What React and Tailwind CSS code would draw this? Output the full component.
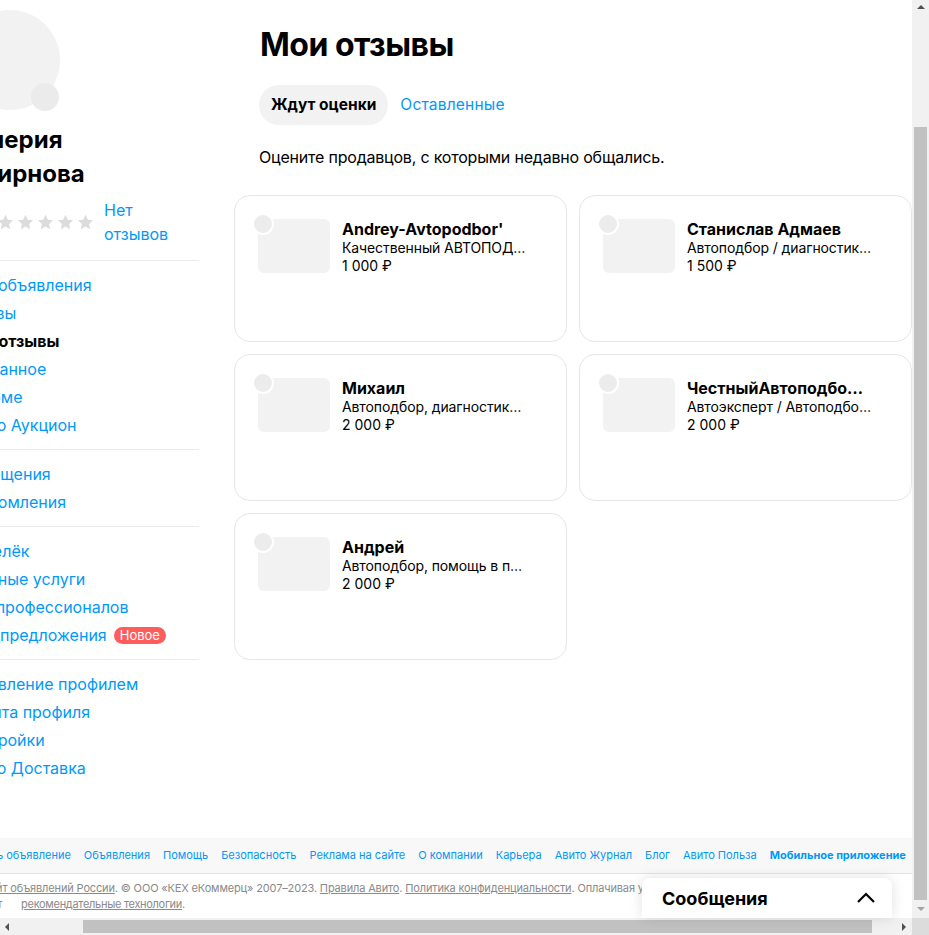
import React from "react";

const font = { fontFamily: "Inter, 'Noto Sans', sans-serif" };

function Star() {
  return (
    <svg width="17" height="17" viewBox="0 0 24 24">
      <path
        d="M12 1.2l3.2 6.9 7.5.8-5.6 5.1 1.6 7.4L12 17.6l-6.7 3.8 1.6-7.4-5.6-5.1 7.5-.8z"
        fill="#dcdcdc"
      />
    </svg>
  );
}

const groups = [
  [
    { t: "Мои объявления" },
    { t: "Заказы" },
    { t: "Мои отзывы", active: true },
    { t: "Избранное" },
    { t: "Резюме" },
    { t: "Авито Аукцион" },
  ],
  [{ t: "Сообщения" }, { t: "Уведомления" }],
  [
    { t: "Кошелёк" },
    { t: "Платные услуги" },
    { t: "Для профессионалов" },
    { t: "Спецпредложения", badge: "Новое" },
  ],
  [
    { t: "Управление профилем" },
    { t: "Защита профиля" },
    { t: "Настройки" },
    { t: "Авито Доставка" },
  ],
];

const cards = [
  { name: "Andrey-Avtopodbor'", desc: "Качественный АВТОПОДБОР по Москве", price: "1 000 ₽" },
  { name: "Станислав Адмаев", desc: "Автоподбор / диагностика авто", price: "1 500 ₽" },
  { name: "Михаил", desc: "Автоподбор, диагностика авто перед покупкой", price: "2 000 ₽" },
  { name: "ЧестныйАвтоподбор77", desc: "Автоэксперт / Автоподбор / Выездная диагностика", price: "2 000 ₽" },
  { name: "Андрей", desc: "Автоподбор, помощь в покупке авто", price: "2 000 ₽" },
];

const footerLinks = [
  "Разместить объявление",
  "Объявления",
  "Помощь",
  "Безопасность",
  "Реклама на сайте",
  "О компании",
  "Карьера",
  "Авито Журнал",
  "Блог",
  "Авито Польза",
];

function Card({ c }) {
  return (
    <div className="h-[147px] rounded-[16px] border border-[#e6e6e6] bg-white pt-[23px] pl-[23px]">
      <div className="flex items-start">
        <div className="relative w-[72px] h-[54px] shrink-0">
          <div className="w-[72px] h-[54px] rounded-[6px] bg-[#f2f2f2]" />
          <div className="absolute left-[-6px] top-[-6px] w-[22px] h-[22px] rounded-full bg-[#ececec] border-2 border-white" />
        </div>
        <div className="ml-[12px] w-[186px] min-w-0">
          <div className="text-[16px] leading-[20px] font-bold text-black truncate">{c.name}</div>
          <div className="text-[14px] leading-[18px] text-black truncate tracking-[-0.1px]">{c.desc}</div>
          <div className="text-[14px] leading-[18px] text-black">{c.price}</div>
        </div>
      </div>
    </div>
  );
}

function Tri({ dir, color }) {
  const pts = {
    up: "4,8 8,4 12,8",
    down: "4,5 8,9 12,5",
    left: "8,4 4,8 8,12",
    right: "6,4 10,8 6,12",
  }[dir];
  return (
    <svg width="16" height="16" viewBox="0 0 16 16">
      <polygon points={pts} fill={color} />
    </svg>
  );
}

export default function App() {
  return (
    <div className="relative w-[929px] h-[935px] overflow-hidden bg-white flex flex-col" style={font}>
      <div className="flex h-[918px]">
        {/* page viewport */}
        <div className="w-[912px] h-[918px] overflow-hidden flex flex-col">
          <div className="flex flex-1 min-h-0">
            {/* sidebar */}
            <aside className="w-[239px] ml-[-40px] shrink-0 pt-[10px]">
              <div className="relative w-[100px] h-[100px]">
                <div className="w-[100px] h-[100px] rounded-full bg-[#f2f2f2]" />
                <div className="absolute left-[71px] top-[73px] w-[28px] h-[28px] rounded-full bg-[#ebebeb]" />
              </div>
              <div className="mt-[13px] text-[24px] leading-[34px] font-bold text-black">
                Валерия
                <br />
                Смирнова
              </div>
              <div className="mt-[7px] flex items-center">
                <div className="ml-[37px] flex gap-[3px]">
                  <Star />
                  <Star />
                  <Star />
                  <Star />
                  <Star />
                </div>
                <div className="ml-[10px] text-[16px] leading-[24px] text-[#0099f7]">
                  Нет
                  <br />
                  отзывов
                </div>
              </div>
              {groups.map((g, gi) => (
                <div key={gi}>
                  <div className={gi === 0 ? "mt-[14px] h-px bg-[#ebebeb]" : "h-px bg-[#ebebeb]"} />
                  <div className="py-[10px]">
                    {g.map((it) => (
                      <div key={it.t} className="flex items-center h-[28px] text-[16px] whitespace-nowrap">
                        <span className={it.active ? "font-bold text-black" : "text-[#0099f7]"}>{it.t}</span>
                        {it.badge && (
                          <span className="ml-[7px] h-[17px] px-[6px] rounded-full bg-[#ff5c5c] text-white text-[13px] leading-[17px]">
                            {it.badge}
                          </span>
                        )}
                      </div>
                    ))}
                  </div>
                </div>
              ))}
            </aside>

            {/* main */}
            <main className="ml-[35px] w-[678px] shrink-0 pt-[25px]">
              <div className="pl-[26px]">
                <h1 className="text-[32px] leading-[40px] font-bold text-black tracking-[-0.5px]">Мои отзывы</h1>
                <div className="mt-[20px] flex ml-[-1px]">
                  <div className="h-[40px] px-[12px] rounded-full bg-[#f2f2f2] flex items-center text-[15.5px] font-bold text-black">
                    Ждут оценки
                  </div>
                  <div className="h-[40px] px-[12px] flex items-center text-[15.5px] text-[#0099f7] tracking-[0.2px]">
                    Оставленные
                  </div>
                </div>
                <p className="mt-[20px] ml-[-1px] text-[16px] leading-[24px] text-black tracking-[-0.2px]">
                  Оцените продавцов, с которыми недавно общались.
                </p>
              </div>
              <div className="mt-[26px] grid grid-cols-2 gap-[12px]">
                {cards.map((c) => (
                  <Card key={c.name} c={c} />
                ))}
              </div>
            </main>
          </div>

          {/* footer */}
          <footer className="shrink-0">
            <div className="h-[36px] bg-[#f8f8f8] border-b border-[#e4e4e4] flex items-center">
              <div className="ml-[-60px] flex gap-[13px] whitespace-nowrap text-[11px] text-[#0099f7]">
                {footerLinks.map((l) => (
                  <span key={l}>{l}</span>
                ))}
                <span className="font-bold">Мобильное приложение</span>
              </div>
            </div>
            <div className="pt-[6px] pb-[6px] text-[11px] leading-[16px] text-[#8a8a8a] whitespace-nowrap">
              <div className="ml-[-64px] tracking-[-0.15px]">
                <span className="underline">Авито — сайт объявлений России</span>. © ООО «КЕХ eКоммерц» 2007–2023.{" "}
                <span className="underline">Правила Авито</span>.{" "}
                <span className="underline">Политика конфиденциальности</span>. Оплачивая услуги на Авито, вы принимаете оферту. Авито
              </div>
              <div className="ml-[-56px] tracking-[-0.3px]">
                использует<span className="ml-[19px] underline">рекомендательные технологии</span>.
              </div>
            </div>
          </footer>
        </div>

        {/* vertical scrollbar */}
        <div className="w-[17px] h-[918px] bg-[#f1f1f1] flex flex-col items-center">
          <div className="h-[17px] flex items-center justify-center">
            <Tri dir="up" color="#505050" />
          </div>
          <div className="flex-1 w-full flex justify-center">
            <div className="mt-[110px] w-[13px] h-[773px] bg-[#c1c1c1]" />
          </div>
          <div className="h-[17px] flex items-center justify-center">
            <Tri dir="down" color="#a3a3a3" />
          </div>
        </div>
      </div>

      {/* horizontal scrollbar */}
      <div className="flex h-[17px]">
        <div className="w-[912px] h-[17px] bg-[#f1f1f1] flex items-center">
          <div className="w-[17px] h-[17px] flex items-center justify-center">
            <Tri dir="left" color="#505050" />
          </div>
          <div className="flex-1 h-full flex items-center">
            <div className="ml-[66px] w-[789px] h-[13px] bg-[#c1c1c1]" />
          </div>
          <div className="w-[17px] h-[17px] flex items-center justify-center">
            <Tri dir="right" color="#505050" />
          </div>
        </div>
        <div className="w-[17px] h-[17px] bg-[#dcdcdc]" />
      </div>

      {/* messages widget */}
      <div className="absolute left-[642px] top-[878px] w-[250px] h-[40px] bg-white rounded-t-[8px] shadow-[0_0_14px_rgba(0,0,0,0.12)] flex items-center justify-between pl-[20px] pr-[16px]">
        <span className="text-[18px] font-bold text-black">Сообщения</span>
        <svg width="20" height="20" viewBox="0 0 20 20">
          <path d="M2 14 L10 6 L18 14" fill="none" stroke="#000" strokeWidth="2.2" />
        </svg>
      </div>
    </div>
  );
}
